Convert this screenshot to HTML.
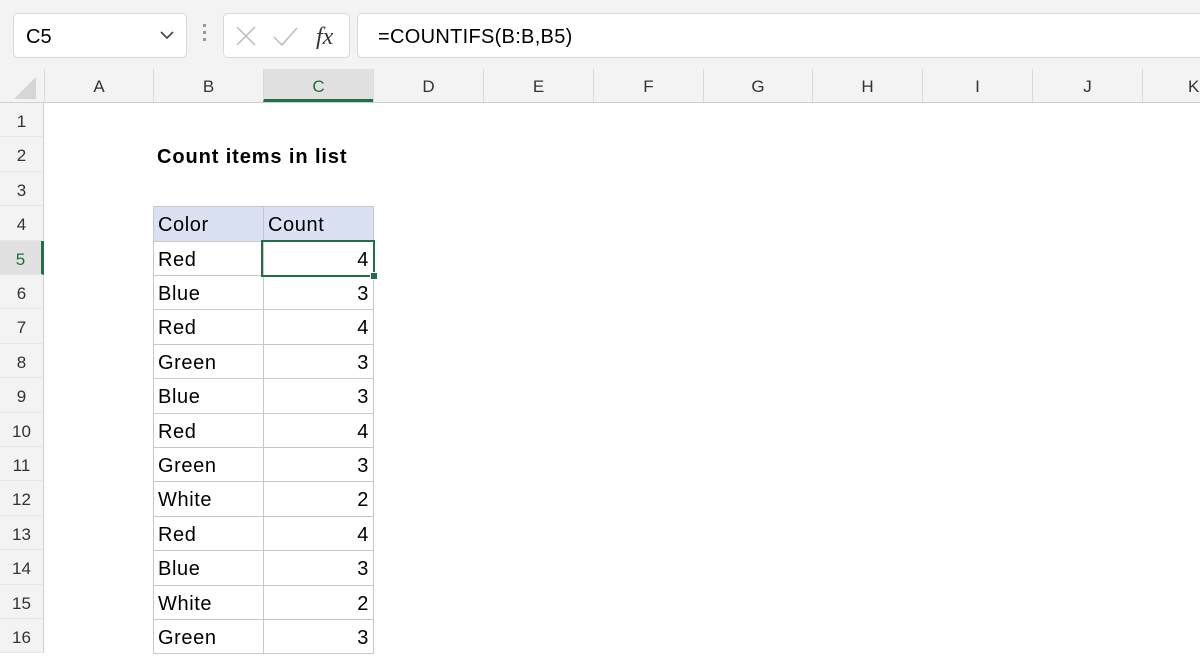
<!DOCTYPE html>
<html><head><style>
body{margin:0;width:1200px;height:630px;overflow:hidden;background:#fff;font-family:"Liberation Sans",sans-serif;position:relative}
.top{position:absolute;left:0;top:0;width:1200px;height:69px;background:#f3f3f3}
.box{position:absolute;background:#fff;border:1px solid #dadada;border-radius:5px}
.hdr{position:absolute;top:69px;height:33px;background:#f3f3f3;border-bottom:1px solid #d0d0d0;left:0;width:1200px}
.ch{position:absolute;top:69px;height:33px;line-height:35px;text-align:center;font-size:17px;color:#333;border-left:1px solid #dadada;box-sizing:border-box}
.rh{position:absolute;left:0;width:44px;background:#f3f3f3;border-right:1px solid #d0d0d0;border-bottom:1px solid #e6e6e6;box-sizing:border-box;text-align:center;font-size:17px;color:#333}
.c{position:absolute;box-sizing:border-box;border:1px solid #c8c8c8;font-size:20px;color:#000;padding:0 4px;line-height:37px;letter-spacing:0.6px}
</style></head><body>
<div class="top"></div>
<div class="box" style="left:13px;top:13px;width:172px;height:43px"><span style="position:absolute;left:12px;top:12px;font-size:20px">C5</span>
<svg style="position:absolute;left:146px;top:16px" width="14" height="10"><path d="M1 2 L7 8 L13 2" stroke="#444" stroke-width="1.6" fill="none"/></svg></div>
<div style="position:absolute;left:203px;top:24px;width:3px;height:3px;background:#999;box-shadow:0 7px #999,0 14px #999"></div>
<div class="box" style="left:223px;top:13px;width:125px;height:43px">
<svg style="position:absolute;left:10px;top:10px" width="110" height="26"><path d="M3 3 L21 21 M21 3 L3 21" stroke="#bbb" stroke-width="1.5"/><path d="M40 13 L48 21 L63 4" stroke="#bbb" stroke-width="1.5" fill="none"/><text x="82" y="20" font-family="Liberation Serif" font-style="italic" font-size="24" fill="#333">fx</text></svg></div>
<div class="box" style="left:357px;top:13px;width:860px;height:43px"><span style="position:absolute;left:20px;top:12px;font-size:20px;letter-spacing:0.3px">=COUNTIFS(B:B,B5)</span></div>
<div class="hdr"></div>
<svg style="position:absolute;left:14px;top:77px" width="22" height="22"><path d="M22 0 L22 22 L0 22Z" fill="#d6d6d6"/></svg>
<div class="ch" style="left:44px;width:109px">A</div>
<div class="ch" style="left:153px;width:110px">B</div>
<div class="ch" style="left:263px;width:110px;background:#e1e1e1;color:#1e6e3f;border-bottom:3px solid #1e7145">C</div>
<div class="ch" style="left:373px;width:110px">D</div>
<div class="ch" style="left:483px;width:110px">E</div>
<div class="ch" style="left:593px;width:110px">F</div>
<div class="ch" style="left:703px;width:109px">G</div>
<div class="ch" style="left:812px;width:110px">H</div>
<div class="ch" style="left:922px;width:110px">I</div>
<div class="ch" style="left:1032px;width:110px">J</div>
<div class="ch" style="left:1142px;width:110px;text-align:left;padding-left:45px">K</div>
<div id="rows"></div>
<div style="position:absolute;left:157px;top:146px;font-size:20px;font-weight:bold;letter-spacing:0.9px">Count items in list</div>
<div id="tbl"></div>
<script>
var r='',t='',top0=103,h=34.4;
for(var i=1;i<=16;i++){var y=top0+(i-1)*h;var sel=i==5;
r+='<div class="rh" style="top:'+y+'px;height:'+h+'px;line-height:'+(h+4)+'px;'+(sel?'background:#e1e1e1;color:#1e6e3f;border-right:3px solid #1e7145;':'')+'">'+i+'</div>';}
document.getElementById('rows').innerHTML=r;
var d=[['Color','Count'],['Red',4],['Blue',3],['Red',4],['Green',3],['Blue',3],['Red',4],['Green',3],['White',2],['Red',4],['Blue',3],['White',2],['Green',3]];
for(var j=0;j<d.length;j++){var y=top0+(j+3)*h;var hd=j==0?'background:#d9e1f2;':'';
t+='<div class="c" style="left:153px;top:'+y+'px;width:111px;height:'+(h+1)+'px;'+hd+'">'+d[j][0]+'</div>';
t+='<div class="c" style="left:263px;top:'+y+'px;width:111px;height:'+(h+1)+'px;'+hd+(j?'text-align:right;':'')+'">'+d[j][1]+'</div>';}
t+='<div style="position:absolute;left:261px;top:'+(top0+4*h-1)+'px;width:114px;height:'+(h+3)+'px;box-sizing:border-box;border:2px solid #1e7145"></div>';
t+='<div style="position:absolute;left:370px;top:'+(top0+5*h-3)+'px;width:6px;height:6px;background:#1e7145;border:1px solid #fff"></div>';
document.getElementById('tbl').innerHTML=t;
</script>
</body></html>
